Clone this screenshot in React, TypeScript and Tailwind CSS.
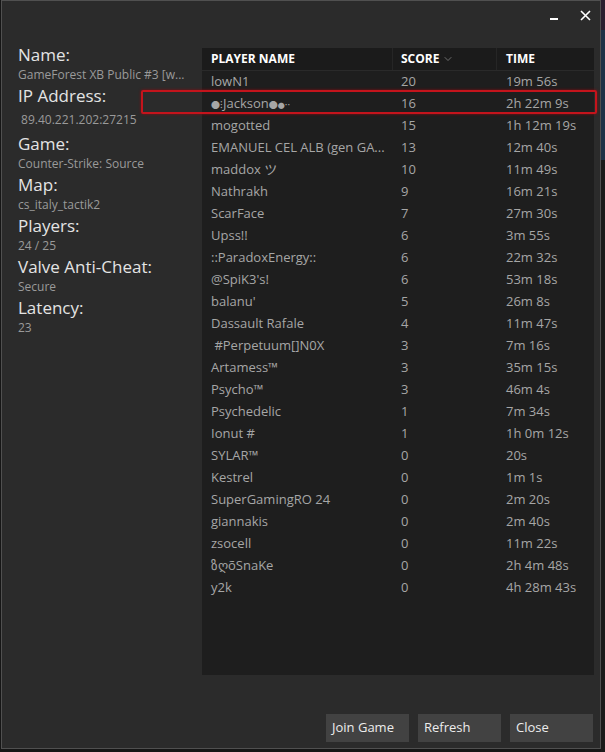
import { ChevronDown } from "lucide-react";
import type { ReactNode } from "react";

const INFO = [
  { label: "Name:", value: "GameForest XB Public #3 [w..." },
  { label: "IP Address:", value: " 89.40.221.202:27215", tall: true },
  { label: "Game:", value: "Counter-Strike: Source" },
  { label: "Map:", value: "cs_italy_tactik2" },
  { label: "Players:", value: "24 / 25" },
  { label: "Valve Anti-Cheat:", value: "Secure" },
  { label: "Latency:", value: "23" },
];

const jackson = (
  <>
    <span className="text-[9px]">●</span>
    <span className="text-[10px]">⁝</span>
    Jackson
    <span className="text-[9px]">●</span>
    <span className="text-[7px]">●</span>
    <span className="text-[10px]">··</span>
  </>
);

const PLAYERS: [ReactNode, string, string][] = [
  ["lowN1", "20", "19m 56s"],
  [jackson, "16", "2h 22m 9s"],
  ["mogotted", "15", "1h 12m 19s"],
  ["EMANUEL CEL ALB (gen GA...", "13", "12m 40s"],
  ["maddox ツ", "10", "11m 49s"],
  ["Nathrakh", "9", "16m 21s"],
  ["ScarFace", "7", "27m 30s"],
  ["Upss!!", "6", "3m 55s"],
  ["::ParadoxEnergy::", "6", "22m 32s"],
  ["@SpiK3's!", "6", "53m 18s"],
  ["balanu'", "5", "26m 8s"],
  ["Dassault Rafale", "4", "11m 47s"],
  [" #Perpetuum[]N0X", "3", "7m 16s"],
  ["Artamess™", "3", "35m 15s"],
  ["Psycho™", "3", "46m 4s"],
  ["Psychedelic", "1", "7m 34s"],
  ["Ionut #", "1", "1h 0m 12s"],
  ["SYLAR™", "0", "20s"],
  ["Kestrel", "0", "1m 1s"],
  ["SuperGamingRO 24", "0", "2m 20s"],
  ["giannakis", "0", "2m 40s"],
  ["zsocell", "0", "11m 22s"],
  ["ზღõSnaKe", "0", "2h 4m 48s"],
  ["y2k", "0", "4h 28m 43s"],
];

export default function App() {
  return (
    <div
      className="w-[605px] h-[752px] bg-[#161616] flex overflow-hidden pl-[1px]"
      style={{ fontFamily: '"Segoe UI", "Open Sans", "Noto Sans CJK JP", sans-serif' }}
    >
      <div className="relative w-[600px] h-[749px] bg-[#2b2b2b] border border-[#505050] flex flex-col">
        {/* title bar */}
        <div className="h-[47px] flex justify-end items-start pt-[9px] pr-[9px] gap-[22px]">
          <div className="w-[8px] h-[2px] bg-white mt-[8px]" />
          <svg width="11" height="11" viewBox="0 0 11 11">
            <path d="M1 1 L10 10 M10 1 L1 10" stroke="white" strokeWidth="1.6" />
          </svg>
        </div>

        <div className="flex">
          {/* info column */}
          <div className="w-[200px] pl-[16px] flex flex-col -mt-[4px]">
            {INFO.map((i) => (
              <div key={i.label} className="flex flex-col">
                <div className="h-[21px] leading-[21px] text-[17px] text-[#e4e4e4] whitespace-nowrap">
                  {i.label}
                </div>
                <div
                  className={
                    (i.tall ? "h-[27px] leading-[27px] " : "h-[20px] leading-[20px] ") +
                    "text-[12px] text-[#9a9a9a] whitespace-pre"
                  }
                >
                  {i.value}
                </div>
              </div>
            ))}
          </div>

          {/* player table */}
          <div className="w-[392px] h-[627px] bg-[#1e1e1e] flex flex-col">
            <div className="h-[23px] flex bg-[#1b1b1b] border-b border-[#2a2a2a] text-[12px] font-bold text-white">
              <div className="w-[191px] pl-[9px] flex items-center border-r border-[#262626]">PLAYER NAME</div>
              <div className="w-[104px] pl-[8px] flex items-center gap-[3px] border-r border-[#262626]">
                SCORE
                <ChevronDown size={12} strokeWidth={1.5} color="#8a8a8a" />
              </div>
              <div className="flex-1 pl-[9px] flex items-center">TIME</div>
            </div>
            {PLAYERS.map(([n, s, t], idx) => (
              <div key={idx} className="h-[22px] flex items-center text-[13px] text-[#a6a6a6]">
                <div className="w-[191px] pl-[9px] whitespace-pre overflow-hidden">{n}</div>
                <div className="w-[104px] pl-[8px]">{s}</div>
                <div className="flex-1 pl-[9px]">{t}</div>
              </div>
            ))}
          </div>
        </div>

        {/* buttons */}
        <div className="flex justify-end gap-[9px] pr-[7px] mt-[39px]">
          {["Join Game", "Refresh", "Close"].map((b) => (
            <button
              key={b}
              className="w-[83px] h-[28px] bg-[#424242] text-[13px] text-[#ececec] text-left pl-[6px]"
            >
              {b}
            </button>
          ))}
        </div>

        {/* highlight */}
        <div className="absolute left-[139px] top-[89px] w-[456px] h-[24px] border-2 border-[#c4141c] rounded-[2px] shadow-[0_0_3px_#8a0d12]" />
      </div>
      <div className="flex-1 flex flex-col">
        <div className="h-[30px] bg-[#2a2030]" />
        <div className="h-[130px] bg-[#1e3348]" />
        <div className="flex-1 bg-[#1a1a1a]" />
      </div>
    </div>
  );
}
